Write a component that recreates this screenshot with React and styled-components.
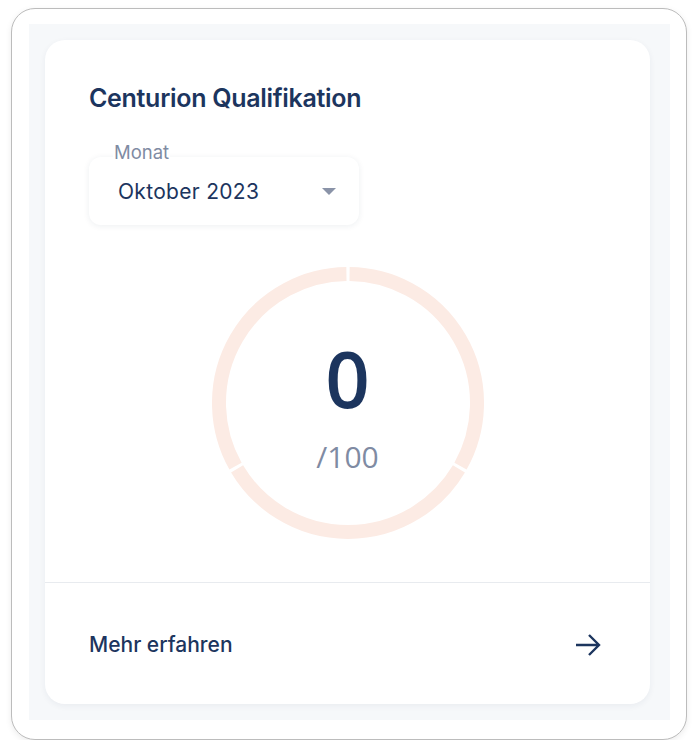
import styled, { createGlobalStyle } from "styled-components";

const GlobalStyle = createGlobalStyle`
  html, body {
    margin: 0;
    padding: 0;
    background: #ffffff;
  }
  body {
    font-family: Inter, "Open Sans", sans-serif;
  }
`;

const ink = "#1c355e";
const muted = "#7f8ba3";

function Ring() {
  const r = 129;
  const cx = 136;
  const cy = 136;
  const gap = 0.7;
  // three arcs, split at 90°, 210° and 330°
  const arc = (from, to) => {
    const rad = (a) => (a * Math.PI) / 180;
    const x1 = cx + r * Math.cos(rad(from));
    const y1 = cy - r * Math.sin(rad(from));
    const x2 = cx + r * Math.cos(rad(to));
    const y2 = cy - r * Math.sin(rad(to));
    return `M ${x1} ${y1} A ${r} ${r} 0 0 1 ${x2} ${y2}`;
  };
  return (
    <RingSvg width="272" height="272" viewBox="0 0 272 272">
      <path d={arc(90 - gap, -30 + gap)} />
      <path d={arc(-30 - gap, -150 + gap)} />
      <path d={arc(210 - gap, 90 + gap)} />
    </RingSvg>
  );
}

export default function App() {
  return (
    <>
      <GlobalStyle />
      <Frame>
        <Panel>
          <Card>
            <Body>
              <Title>Centurion Qualifikation</Title>
              <Select>
                <Label>Monat</Label>
                <Value>Oktober 2023</Value>
                <Caret />
              </Select>
              <Gauge>
                <Ring />
                <Score>
                  <Big>0</Big>
                  <Small>/100</Small>
                </Score>
              </Gauge>
            </Body>
            <Footer>
              <span>Mehr erfahren</span>
              <svg width="26" height="24" viewBox="0 0 26 24" fill="none">
                <path
                  d="M1 12 H24 M14 2 L24 12 L14 22"
                  stroke={ink}
                  strokeWidth="2.4"
                />
              </svg>
            </Footer>
          </Card>
        </Panel>
      </Frame>
    </>
  );
}

const Frame = styled.div`
  margin: 8px 11px 0 11px;
  width: 676px;
  height: 732px;
  box-sizing: border-box;
  border: 1.5px solid #bcbcbc;
  border-radius: 24px;
  background: #fff;
  box-shadow: 0 2px 6px rgba(0, 0, 0, 0.08);
  padding: 15px 16px 19px 17px;
`;

const Panel = styled.div`
  background: #f6f8fa;
  height: 100%;
  box-sizing: border-box;
  padding: 16px 20px 16px 16px;
`;

const Card = styled.div`
  background: #fff;
  border-radius: 20px;
  box-shadow: 0 2px 6px rgba(30, 50, 80, 0.06);
  height: 100%;
  display: flex;
  flex-direction: column;
  overflow: hidden;
`;

const Body = styled.div`
  padding: 44px 44px 0 44px;
  height: 543px;
  box-sizing: border-box;
  border-bottom: 1px solid #e8ebef;
`;

const Title = styled.h2`
  margin: 0;
  font-family: Inter, sans-serif;
  font-size: 25px;
  font-weight: 600;
  color: ${ink};
  letter-spacing: -0.3px;
  line-height: 28px;
`;

const Select = styled.div`
  position: relative;
  margin-top: 45px;
  width: 270px;
  height: 68px;
  box-sizing: border-box;
  border-radius: 12px;
  background: #fff;
  box-shadow: 0 1px 6px rgba(30, 50, 80, 0.08);
  display: flex;
  align-items: center;
  padding: 0 23px 0 29px;
`;

const Label = styled.span`
  position: absolute;
  left: 24px;
  top: -16px;
  font-family: Inter, sans-serif;
  font-size: 18.5px;
  color: ${muted};
  background: #fff;
  padding: 0 1px;
`;

const Value = styled.span`
  flex: 1;
  font-family: Inter, sans-serif;
  font-size: 21px;
  color: ${ink};
  letter-spacing: 0.3px;
`;

const Caret = styled.span`
  width: 0;
  height: 0;
  border-left: 7px solid transparent;
  border-right: 7px solid transparent;
  border-top: 7px solid #8a93a8;
`;

const Gauge = styled.div`
  position: relative;
  width: 272px;
  height: 272px;
  margin: 42px auto 0;
`;

const RingSvg = styled.svg`
  display: block;
  path {
    fill: none;
    stroke: #fcebe4;
    stroke-width: 14;
  }
`;

const Score = styled.div`
  position: absolute;
  inset: 0;
  display: flex;
  flex-direction: column;
  align-items: center;
  padding-top: 66px;
  font-family: "Open Sans", sans-serif;
`;

const Big = styled.div`
  font-size: 78px;
  font-weight: 600;
  color: ${ink};
  line-height: 90px;
`;

const Small = styled.div`
  font-size: 30px;
  color: ${muted};
  line-height: 40px;
  margin-top: 14px;
`;

const Footer = styled.div`
  flex: 1;
  display: flex;
  align-items: center;
  justify-content: space-between;
  padding: 2px 49px 0 44px;
  font-family: Inter, sans-serif;
  font-size: 21px;
  font-weight: 500;
  color: ${ink};
  svg {
    display: block;
  }
`;
